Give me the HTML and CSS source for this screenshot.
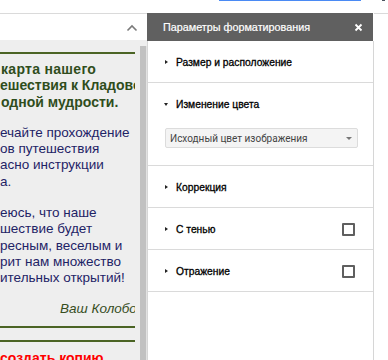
FILE: index.html
```html
<!DOCTYPE html>
<html lang="ru">
<head>
<meta charset="utf-8">
<title>Параметры форматирования</title>
<link rel="stylesheet" href="styles.css">
</head>
<body>
<div class="topstrip">
  <div class="tab-focus"></div>
  <div class="corner-mark"></div>
</div>
<div class="main">
  <div class="leftpane">
    <div class="toolbar">
      <svg class="caret" width="12" height="8" viewBox="0 0 12 8"><path d="M1.5 6.5 L6 2 L10.5 6.5" fill="none" stroke="#7a7a7a" stroke-width="1.6"/></svg>
    </div>
    <div class="docarea">
      <div class="doc">
        <div class="rule rule-top"></div>
        <p class="heading"><span class="l1">карта нашего</span><br>ешествия к Кладовой<br><span class="l3">одной мудрости.</span></p>
        <p class="body">ечайте прохождение<br>ов путешествия<br>асно инструкции<br>а.</p>
        <p class="body p2">еюсь, что наше<br>шествие будет<br>ресным, веселым и<br>рит нам множество<br>ительных открытий!</p>
        <p class="sign">Ваш Колобок</p>
        <div class="rule rule-a"></div>
        <div class="rule rule-b"></div>
        <p class="red">создать копию</p>
      </div>
      <div class="vscroll"><div class="thumb"></div></div>
    </div>
  </div>
  <div class="panel">
    <div class="panel-head">
      <span class="panel-title">Параметры форматирования</span>
      <svg class="close" width="9" height="9" viewBox="0 0 9 9"><path d="M1.5 1.5 L7.5 7.5 M7.5 1.5 L1.5 7.5" stroke="#fff" stroke-width="1.8"/></svg>
    </div>
    <div class="panel-body">
      <div class="section">
        <div class="sec-row"><span class="tri tri-right"></span><span class="sec-title">Размер и расположение</span></div>
      </div>
      <div class="section open">
        <div class="sec-row"><span class="tri tri-down"></span><span class="sec-title">Изменение цвета</span></div>
        <div class="select"><span class="select-text">Исходный цвет изображения</span><span class="select-arrow"></span></div>
      </div>
      <div class="section">
        <div class="sec-row"><span class="tri tri-right"></span><span class="sec-title">Коррекция</span></div>
      </div>
      <div class="section">
        <div class="sec-row"><span class="tri tri-right"></span><span class="sec-title">С тенью</span><span class="check"></span></div>
      </div>
      <div class="section">
        <div class="sec-row"><span class="tri tri-right"></span><span class="sec-title">Отражение</span><span class="check"></span></div>
      </div>
    </div>
  </div>
  <div class="rightstrip"></div>
</div>
</body>
</html>
```

FILE: styles.css
```css
* { box-sizing: border-box; }
html, body { margin: 0; padding: 0; }
body {
  width: 388px;
  height: 360px;
  overflow: hidden;
  background: #fff;
  font-family: "Liberation Sans", Arial, sans-serif;
  display: flex;
  flex-direction: column;
}
.topstrip {
  height: 13px;
  flex: none;
  position: relative;
  background: #fff;
}
.tab-focus {
  position: absolute;
  left: 219px;
  top: 0;
  width: 142px;
  height: 1px;
  background: #4a8af4;
}
.corner-mark {
  position: absolute;
  left: 382px;
  top: 0;
  width: 3px;
  height: 1px;
  background: #4d5560;
}
.main {
  flex: 1;
  display: flex;
  min-height: 0;
}
.leftpane {
  width: 147px;
  flex: none;
  display: flex;
  flex-direction: column;
}
.toolbar {
  height: 27px;
  flex: none;
  border-top: 1px solid #dadada;
  background: #fff;
  display: flex;
  align-items: center;
  justify-content: flex-end;
  padding-right: 9px;
}
.caret { display: block; margin-top: 1px; }
.docarea {
  flex: 1;
  background: #eeeeee;
  display: flex;
  min-height: 0;
}
.doc {
  width: 135px;
  overflow: hidden;
  padding-top: 12px;
  font-size: 13.5px;
  line-height: 16.3px;
}
.doc p { margin: 0; white-space: nowrap; }
.rule {
  height: 2px;
  background: #4b6424;
  width: 135px;
}
.heading {
  margin-top: 7px !important;
  font-weight: bold;
  font-size: 14px;
  color: #2f4d1c;
}
.heading .l1 { padding-left: 1px; letter-spacing: 0.3px; }
.heading .l3 { padding-left: 1px; }
.body {
  margin-top: 15px !important;
  color: #1e2366;
}
.p2 { margin-top: 15px !important; }
.sign {
  margin-top: 14px !important;
  font-style: italic;
  color: #364d1d;
  padding-left: 60px;
}
.rule-a { margin-top: 9px; }
.rule-b { margin-top: 12px; }
.red {
  margin-top: 8px !important;
  color: #ff0000;
  font-weight: bold;
  font-size: 14px;
}
.vscroll {
  width: 12px;
  flex: none;
  padding-left: 5px;
  padding-top: 6px;
  display: flex;
}
.thumb {
  width: 6px;
  background: #c1c1c1;
  height: 400px;
}
.vscroll::after {
  content: "";
  width: 1px;
  background: #e2e2e2;
}
.panel {
  width: 227px;
  flex: none;
  display: flex;
  flex-direction: column;
}
.panel-head {
  height: 28px;
  flex: none;
  background: #606060;
  display: flex;
  align-items: center;
  justify-content: space-between;
  padding: 0 10px 0 16px;
  margin-right: 1px;
}
.panel-title {
  color: #fff;
  font-family: "Liberation Sans", Arial, sans-serif;
  font-size: 10.8px;
  -webkit-text-stroke: 0.2px #fff;
}
.close { display: block; }
.panel-body {
  flex: 1;
  border-left: 1px solid #d6d6d6;
  border-right: 1px solid #d6d6d6;
  background: #fff;
}
.section {
  border-bottom: 1px solid #dadada;
  height: 42px;
}
.section.open {
  height: 83px;
}
.sec-row {
  height: 41px;
  display: flex;
  align-items: center;
  padding-left: 17px;
  padding-right: 18px;
  padding-top: 1px;
}
.tri {
  width: 0;
  height: 0;
  flex: none;
  margin-right: 8px;
}
.tri-right {
  border-top: 2px solid transparent;
  border-bottom: 2px solid transparent;
  border-left: 3px solid #222;
}
.tri-down {
  border-left: 2px solid transparent;
  border-right: 2px solid transparent;
  border-top: 3px solid #222;
  margin-left: -1px;
  margin-right: 8px;
}
.sec-title {
  flex: 1;
  font-family: "Liberation Sans", Arial, sans-serif;
  font-size: 10.3px;
  color: #000;
  -webkit-text-stroke: 0.3px #000;
}
.check {
  width: 13px;
  height: 13px;
  border: 2px solid #5f5f5f;
  border-radius: 1px;
  flex: none;
}
.select {
  margin: 4px 15px 0 17px;
  height: 20px;
  background: #f4f4f4;
  border: 1px solid #dcdcdc;
  border-radius: 2px;
  display: flex;
  align-items: center;
  justify-content: space-between;
  padding: 0 5px 0 4px;
}
.select-text {
  font-family: Roboto, "Liberation Sans", sans-serif;
  font-size: 10px;
  color: #444;
}
.select-arrow {
  width: 0;
  height: 0;
  border-left: 3px solid transparent;
  border-right: 3px solid transparent;
  border-top: 3px solid #777;
}
.rightstrip {
  flex: 1;
  border-top: 1px solid #dadada;
  background: #fff;
}
```
